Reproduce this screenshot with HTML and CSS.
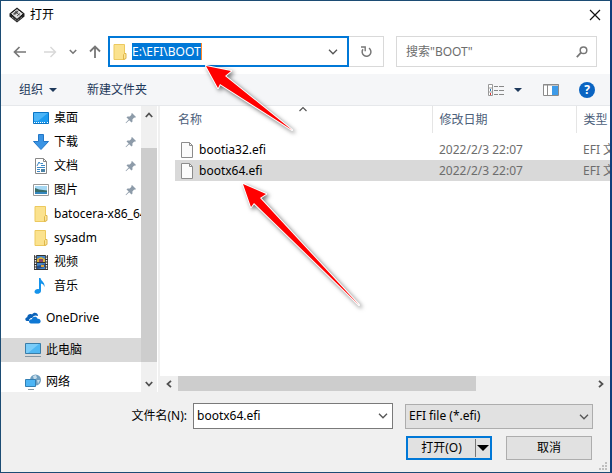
FILE: index.html
```html
<!DOCTYPE html>
<html lang="zh-CN">
<head>
<meta charset="utf-8">
<title>打开</title>
<meta name="viewport" content="width=device-width, initial-scale=1">
<link rel="stylesheet" href="styles.css">
</head>
<body>
<svg class="defs" aria-hidden="true">
  <symbol id="pin" viewBox="0 0 12 12"><path d="M7 1l4 4-1 .8-.8-.2L7.4 7.400l.1 2.100-1 1L4.200 8.200 1 11.200l-.4-.4L3.700 7.600 1.500 5.400l1-1 2.200.1L6.500 2.800 6.200 2z" fill="#8d9ba9"/></symbol>
  <symbol id="folder" viewBox="0 0 14 16"><path d="M1 .5h10.500v15H1z" fill="#fbe28e" stroke="#ecc95f"/><path d="M10.500 10.500l1-1h1.500v5l-2.500 1z" fill="#fbe69b" stroke="#dfb64b"/></symbol>
  <symbol id="page" viewBox="0 0 12 16"><path d="M.5.500h8l3 3v12H.5z" fill="#fbfbfb" stroke="#8c8c8c"/><path d="M8.500.500v3h3" fill="none" stroke="#8c8c8c"/></symbol>
  <symbol id="down" viewBox="0 0 10 6"><path d="M1 .8l4 4 4-4" fill="none" stroke="currentColor" stroke-width="1.300"/></symbol>
</svg>
<main class="dialog">
  <header class="title">
    <svg width="16" height="16" viewBox="0 0 16 16"><path d="M8 .5l7.500 6v3L8 15.500.5 9.500v-3z" fill="#222"/><path d="M8 1.500l6.500 5.200L8 12.400 1.500 6.700z" fill="#ddd" stroke="#111"/><path d="M4 6.500l3.500-3 2 1.600L6 8.100z" fill="#777"/><path d="M8 9l3-2.500M6 4.500l4.500 3.600M9.500 3.500l-5 4.200" stroke="#333" stroke-width=".8"/><path d="M3 10l5 4 5-4" stroke="#aaa" fill="none" stroke-dasharray="1 1"/></svg>
    <h1>打开</h1>
    <button class="plain close" aria-label="关闭"><svg width="12" height="12" viewBox="0 0 12 12"><path d="M1 1l10 10M11 1L1 11" stroke="#111" stroke-width="1.200"/></svg></button>
  </header>
  <nav class="navbar">
    <div class="history">
      <button class="plain" aria-label="后退"><svg width="14" height="12" viewBox="0 0 14 12"><path d="M13 6H2M6.500 1L1.500 6l5 5" fill="none" stroke="#777" stroke-width="1.700"/></svg></button>
      <button class="plain next" aria-label="前进"><svg width="14" height="12" viewBox="0 0 14 12"><path d="M1 6h11M7.500 1l5 5-5 5" fill="none" stroke="#d8d8d8" stroke-width="1.400"/></svg></button>
      <button class="plain" aria-label="最近"><svg width="8" height="6" viewBox="0 0 10 7"><path d="M1 1l4 4 4-4" fill="none" stroke="#777" stroke-width="2"/></svg></button>
      <button class="plain" aria-label="上移"><svg width="12" height="14" viewBox="0 0 12 14"><path d="M6 13V2M1 6.500l5-5 5 5" fill="none" stroke="#777" stroke-width="1.800"/></svg></button>
    </div>
    <div class="address">
      <svg width="14" height="16"><use href="#folder"/></svg>
      <input class="path" aria-label="地址" value="E:\EFI\BOOT" size="8">
      <button class="plain push" aria-label="展开地址"><svg width="10" height="6"><use href="#down"/></svg></button>
    </div>
    <button class="plain refresh" aria-label="刷新"><svg width="12" height="12" viewBox="0 0 12 12"><path d="M9 2.200A4.400 4.400 0 1 1 3 3.200" fill="none" stroke="#777" stroke-width="1.500"/><path d="M1 1h4.200v4.200" fill="none" stroke="#777" stroke-width="1.400"/></svg></button>
    <div class="search">
      <input aria-label="搜索" placeholder='搜索"BOOT"' size="8">
      <svg width="12" height="12" viewBox="0 0 12 12"><circle cx="7.500" cy="4.200" r="3.300" fill="none" stroke="#777" stroke-width="1.500"/><path d="M5 6.700L.8 11.200" stroke="#777" stroke-width="1.800"/></svg>
    </div>
  </nav>
  <div class="toolbar">
    <button class="plain organize">组织 <svg width="8" height="4" viewBox="0 0 8 4"><path d="M0 0h8L4 4z" fill="#1e395b"/></svg></button>
    <button class="plain">新建文件夹</button>
    <button class="plain view" aria-label="视图"><svg width="16" height="12" viewBox="0 0 16 12"><path d="M.5.500h4v11h-4zM.5 4h4M.5 8h4" fill="#fff" stroke="#999"/><path d="M6 2.500h4m1 0h5M6 6.500h4m1 0h5M6 10.500h4m1 0h5" stroke="#888"/><path d="M2 6h1" stroke="#27b" stroke-width="2"/><path d="M2 10h1" stroke="#d33" stroke-width="2"/></svg><svg width="8" height="4" viewBox="0 0 8 4"><path d="M0 0h8L4 4z" fill="#1e395b"/></svg></button>
    <button class="plain" aria-label="预览窗格"><svg width="16" height="12" viewBox="0 0 16 12"><path d="M.5.500h15v11H.5z" fill="#fff" stroke="#8b8b8b"/><path d="M0 1h16M4.500 1v11" stroke="#8b8b8b"/><path d="M9 2h6v9H9z" fill="#3d9be9"/></svg></button>
    <button class="plain help" aria-label="帮助">?</button>
  </div>
  <div class="content">
    <aside class="sidebar">
      <ul class="tree">
        <li><svg width="16" height="16" viewBox="0 0 16 16"><path d="M.5 2.500h15v11H.5z" fill="#1c9bf0" stroke="#0a74c4"/><path d="M1 3h14L5 11H1z" fill="#4bb4f7"/><path d="M1 12.500h1m1 0h9m2 0h1" stroke="#fff" stroke-dasharray="1 1"/></svg><span>桌面</span><svg class="pin" width="12" height="12"><use href="#pin"/></svg></li>
        <li><svg width="16" height="16" viewBox="0 0 16 16"><path d="M5.500.500h5v7h5L8 15.500.5 7.500h5z" fill="#3a94e4" stroke="#2377c7"/></svg><span>下载</span><svg class="pin" width="12" height="12"><use href="#pin"/></svg></li>
        <li><svg width="16" height="16" viewBox="0 0 16 16"><path d="M2.500.500h8l3 3v12h-11z" fill="#fff" stroke="#888"/><path d="M10.500.500v3h3" fill="none" stroke="#888"/><path d="M4 8l2-4 1.500 2M8 5.500h2M8 7.500h4M4 9.500h8M4 11.500h3M4 13.500h3" fill="none" stroke="#3c88c5"/><path d="M8 11h4v3H8z" fill="#4b83a6"/></svg><span>文档</span><svg class="pin" width="12" height="12"><use href="#pin"/></svg></li>
        <li><svg width="16" height="16" viewBox="0 0 16 16"><path d="M.5 2.500h15v11H.5z" fill="#fff" stroke="#999"/><path d="M2 4h12v8H2z" fill="#a5d7f2"/><path d="M2 6l4 1.500 8 1V10H2z" fill="#386c69"/><path d="M2 10h12v2H2z" fill="#3487bd"/></svg><span>图片</span><svg class="pin" width="12" height="12"><use href="#pin"/></svg></li>
        <li><svg width="16" height="16"><use href="#folder"/></svg><span class="long">batocera-x86_64</span></li>
        <li><svg width="16" height="16"><use href="#folder"/></svg><span>sysadm</span></li>
        <li><svg width="16" height="16" viewBox="0 0 16 16"><path d="M1 1h14v15H1z" fill="#333"/><path d="M2.500 1v15M13.500 1v15" stroke="#eee" stroke-width="1.400" stroke-dasharray="1.500 1"/><path d="M4 2h8v6H4zM4 9h8v6H4z" fill="#4586c8"/><path d="M4 5l4-2 4 2v3H4z" fill="#d8b43a"/><path d="M6 5h4v3H6z" fill="#8a4668"/><path d="M4 12l8-2v3l-8 2z" fill="#284e87"/><path d="M8 11h3v2H8z" fill="#dca53c"/></svg><span>视频</span></li>
        <li><svg width="16" height="16" viewBox="0 0 16 16"><path d="M6 0h1.500c.5 3.300 4.900 4.200 3.900 9-.4-2-1.700-3.200-3.400-3.500V13c0 3.300-6.500 4-6.500.8 0-2 2.500-3.300 4.500-2.600z" fill="#1593eb"/></svg><span>音乐</span></li>
        <li class="root"><svg width="16" height="16" viewBox="0 0 16 16"><path d="M4 11H2.500C-.5 11-.2 7.500 2.200 7.300 2.500 4.500 5 3.500 7 4.500c2-3 6-1.500 6 1.500C10 4.500 8 6 7.300 8 5 7.500 3.800 9.500 4 11z" fill="#0b62b8"/><path d="M6 13.500c-3 0-2.500-4.500.8-4.200.8-3.300 5-3.200 5.700-.6 3.700-.5 4.300 4.800 1 4.800z" fill="#0f78d4"/></svg><span>OneDrive</span></li>
        <li class="root current"><svg width="16" height="16" viewBox="0 0 16 16"><path d="M.5 1.500h15v10H.5z" fill="#4fb7f2" stroke="#3a7da8"/><path d="M1 2h13L3 11H1z" fill="#7accf8"/><path d="M0 14.500h16" stroke="#8496a2"/></svg><span>此电脑</span></li>
        <li class="root"><svg width="16" height="16" viewBox="0 0 16 16"><circle cx="10.500" cy="6" r="5.500" fill="#6f9fc0"/><path d="M8 2l3-1 1 3-3 2zM12 6l3 0-2 4z" fill="#c5dcea"/><path d="M.5 5.500h10v7H.5z" fill="#4db5f5" stroke="#327fb3"/><path d="M3 15.500h6" stroke="#8496a2"/></svg><span>网络</span></li>
      </ul>
      <div class="vscroll">
        <button class="plain" aria-label="向上滚动"><svg width="8" height="6" viewBox="0 0 8 6"><path d="M.8 5L4 1.500 7.200 5" fill="none" stroke="#505050" stroke-width="1.800"/></svg></button>
        <div class="vthumb"></div>
        <button class="plain" aria-label="向下滚动"><svg width="8" height="6" viewBox="0 0 8 6"><path d="M.8 1L4 4.500 7.200 1" fill="none" stroke="#505050" stroke-width="1.800"/></svg></button>
      </div>
    </aside>
    <section class="files">
      <div class="list">
        <table>
          <colgroup><col class="c-name"><col class="c-date"><col></colgroup>
          <thead><tr><th>名称<svg class="sort" width="10" height="6" viewBox="0 0 10 6"><path d="M1.500 5L5 1.500 8.500 5" fill="none" stroke="#555" stroke-width="1.200"/></svg></th><th>修改日期</th><th>类型</th></tr></thead>
          <tbody>
            <tr><td><div class="file"><svg width="12" height="16"><use href="#page"/></svg>bootia32.efi</div></td><td>2022/2/3 22:07</td><td>EFI 文件</td></tr>
            <tr class="selected"><td><div class="file"><svg width="12" height="16"><use href="#page"/></svg>bootx64.efi</div></td><td>2022/2/3 22:07</td><td>EFI 文件</td></tr>
          </tbody>
        </table>
      </div>
      <div class="hscroll">
        <button class="plain" aria-label="向左滚动"><svg width="6" height="8" viewBox="0 0 6 8"><path d="M5 .8L1.500 4 5 7.200" fill="none" stroke="#505050" stroke-width="1.800"/></svg></button>
        <div class="track"><div class="hthumb"></div></div>
        <button class="plain" aria-label="向右滚动"><svg width="6" height="8" viewBox="0 0 6 8"><path d="M1 .8L4.500 4 1 7.200" fill="none" stroke="#505050" stroke-width="1.800"/></svg></button>
      </div>
    </section>
  </div>
  <footer class="footer">
    <div class="fields">
      <label for="name">文件名(N):</label>
      <div class="combo">
        <input id="name" value="bootx64.efi" size="8">
        <button class="plain" aria-label="文件名列表"><svg width="10" height="6"><use href="#down"/></svg></button>
      </div>
      <div class="filter">
        <select aria-label="文件类型"><option>EFI file (*.efi)</option></select>
        <svg width="10" height="6"><use href="#down"/></svg>
      </div>
    </div>
    <div class="actions">
      <div class="split">
        <button class="plain open">打开(O)</button>
        <button class="plain more" aria-label="打开选项"><svg width="12" height="6" viewBox="0 0 12 6"><path d="M0 0h12L6 6z"/></svg></button>
      </div>
      <button class="cancel">取消</button>
    </div>
    <svg class="grip" width="9" height="9" viewBox="0 0 9 9"><path d="M6 0h2v2H6zM3 3h2v2H3zM6 3h2v2H6zM0 6h2v2H0zM3 6h2v2H3zM6 6h2v2H6z" fill="#bfbfbf"/></svg>
  </footer>
</main>
<svg class="pointers" width="612" height="473" viewBox="0 0 612 473" aria-hidden="true">
  <g fill="#f00" stroke="#fff" stroke-width="2" stroke-linejoin="round" paint-order="stroke">
    <path d="M206 66l25 5-6 5 67 54-72-46-2 4z"/>
    <path d="M243 184l23 10-6 4 99 107L254 203l-3 4z"/>
  </g>
</svg>
</body>
</html>
```
FILE: styles.css
```css
* { box-sizing: border-box; }
body {
  margin: 0;
  font: 12px/16px "Noto Sans", "Noto Sans CJK SC", sans-serif;
  color: #000;
}
button, input, select { font: inherit; color: inherit; }
input { min-width: 0; border: 0; padding: 0; outline: 0; background: transparent; }
svg { flex: none; display: block; }
.defs { position: absolute; width: 0; height: 0; }
.plain {
  display: flex;
  align-items: center;
  justify-content: center;
  border: 0;
  padding: 0;
  background: none;
}
.dialog {
  display: flex;
  flex-direction: column;
  height: 100vh;
  border: 1px solid #1c4c74;
  border-right: 2px solid #123e7b;
  background: #fff;
}
.title {
  display: flex;
  align-items: center;
  gap: 5px;
  height: 28px;
  padding: 0 9px 0 8px;
}
.title h1 { margin: 0; font-size: 12px; font-weight: 400; }
.close { margin-left: auto; }

.navbar {
  display: flex;
  align-items: center;
  height: 45px;
  padding: 0 13px 0 12px;
}
.history { display: flex; align-items: center; gap: 12px; width: 95px; }
.next { margin-left: 4px; }
.address {
  display: flex;
  flex: 1;
  align-items: center;
  gap: 5px;
  height: 31px;
  border: 2px solid #0078d7;
  padding: 0 9px 0 3px;
}
.path {
  field-sizing: content;
  height: 17px;
  border-right: 1px solid #ff8728;
  background: #0078d7;
  color: #fff;
}
.push { margin-left: auto; color: #555; }
.refresh { width: 35px; height: 31px; border: 1px solid #d9d9d9; border-left: 0; }
.search {
  display: flex;
  align-items: center;
  width: 201px;
  height: 31px;
  margin-left: 12px;
  border: 1px solid #d9d9d9;
  padding: 0 8px 0 9px;
}
.search input { flex: 1; }
.search input::placeholder { color: #6d6d6d; opacity: 1; }

.toolbar {
  display: flex;
  flex: none;
  align-items: center;
  height: 32px;
  padding: 0 15px 0 18px;
  border-bottom: 1px solid #e6e8eb;
  background: #f5f6f8;
  color: #1e395b;
}
.organize { gap: 6px; margin-right: 30px; }
.view { gap: 10px; margin: 0 21px 0 auto; }
.help {
  width: 16px;
  height: 16px;
  margin-left: 20px;
  border-radius: 50%;
  background: #0a64c2;
  color: #fff;
  font-weight: 700;
}

.content { display: flex; flex: 1; min-height: 0; }
.sidebar { display: flex; width: 156px; overflow: hidden; }
.tree { flex: 1; min-width: 0; margin: 0; padding: 0; list-style: none; }
.tree li {
  display: flex;
  align-items: center;
  gap: 5px;
  height: 24px;
  padding: 0 4px 0 32px;
  white-space: nowrap;
}
.tree li:has(.long) { overflow: hidden; padding-right: 0; }
.tree .root { margin-top: 8px; padding-left: 24px; }
.tree .current { background: #d9d9d9; }
.pin { margin-left: auto; }
.vscroll { display: flex; flex-direction: column; width: 16px; background: #f0f0f0; }
.vscroll button { height: 17px; }
.vthumb { flex: 1; margin: 25px 0 13px; background: #cdcdcd; }

.files {
  display: flex;
  flex: 1;
  flex-direction: column;
  min-width: 0;
  margin-left: 1px;
  border-left: 2px solid #f0f0f0;
}
.list { flex: 1; min-height: 0; overflow: hidden; padding-left: 15px; }
table { width: 100%; table-layout: fixed; border-collapse: collapse; }
.c-name { width: 257px; }
.c-date { width: 144px; }
th {
  position: relative;
  height: 27px;
  padding: 0 0 0 3px;
  border-right: 1px solid #e5e5e5;
  color: #4c607a;
  font-weight: 400;
  text-align: left;
  white-space: nowrap;
}
th:last-child { border: 0; }
th + th, td + td { padding-left: 7px; }
.sort { position: absolute; top: 0; left: calc(50% - 5px); }
tbody::before { content: ""; display: table-row; height: 6px; }
td {
  height: 21px;
  padding: 0;
  overflow: hidden;
  color: #6d6d6d;
  white-space: nowrap;
}
.file { display: flex; align-items: center; gap: 6px; padding-left: 6px; color: #000; }
.selected { background: #d9d9d9; }
.hscroll { display: flex; height: 16px; background: #f0f0f0; }
.hscroll button { width: 18px; }
.track { flex: 1; }
.hthumb { width: 72%; height: 15px; background: #cdcdcd; }

.footer {
  position: relative;
  padding: 11px 17px 12px 0;
  background: #f0f0f0;
}
.fields { display: flex; align-items: center; }
.fields label { width: 192px; padding-right: 6px; text-align: right; }
.combo {
  display: flex;
  flex: 1;
  align-items: center;
  height: 26px;
  border: 1px solid #7a7a7a;
  padding: 0 4px 0 3px;
  background: #fff;
  color: #555;
}
.combo input { flex: 1; color: #000; }
.filter { position: relative; width: 188px; margin-left: 12px; color: #555; }
.filter select {
  width: 100%;
  height: 25px;
  border: 1px solid #adadad;
  border-radius: 0;
  padding: 0 3px;
  appearance: none;
  background: #e1e1e1;
  color: #000;
}
.filter svg { position: absolute; top: 10px; right: 4px; }
.actions { display: flex; justify-content: flex-end; gap: 14px; margin: 7px 1px 0 0; }
.split { display: flex; width: 86px; height: 24px; border: 2px solid #0078d7; background: #e1e1e1; }
.open { flex: 1; }
.more { width: 15px; margin: 1px 0; border-left: 1px solid #777; }
.cancel { width: 86px; height: 24px; border: 1px solid #adadad; padding: 0; background: #e1e1e1; }
.grip { position: absolute; right: 2px; bottom: 1px; }
.pointers {
  position: absolute;
  top: 0;
  left: 0;
  pointer-events: none;
  filter: drop-shadow(2px 2px 2px rgb(0 0 0 / 55%));
}
```
